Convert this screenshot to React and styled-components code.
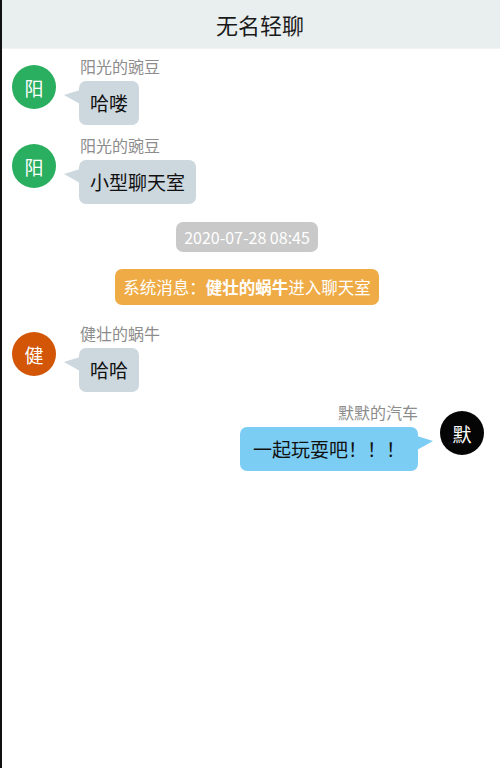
import React from 'react';
import styled, { createGlobalStyle } from 'styled-components';

const GlobalStyle = createGlobalStyle`
    html, body {
        margin: 0;
        padding: 0;
        background: #fff;
    }
    body {
        font-family: "Noto Sans CJK SC", "Noto Sans", sans-serif;
    }
`;

const Page = styled.div`
    min-height: 768px;
    border-left: 2px solid #111;
    background: #fff;
    box-sizing: border-box;
`;

const Header = styled.div`
    height: 48px;
    background-color: #e9eeee;
    display: flex;
    align-items: center;
    justify-content: center;
    padding-left: 18px;
    font-size: 22px;
    color: #1a1a1a;
    border-bottom: 1px solid #f2f4f4;
`;

const List = styled.div`
    display: flex;
    flex-direction: column;
    padding: 7px 0 0;
`;

const Row = styled.div`
    display: flex;
    flex-direction: ${(p) => (p.$mine ? 'row-reverse' : 'row')};
    align-items: flex-start;
    padding: 0 ${(p) => (p.$mine ? '16px' : '0')} 0 ${(p) => (p.$mine ? '0' : '10px')};
    margin-bottom: 10px;
`;

const Avatar = styled.div`
    width: 44px;
    height: 44px;
    border-radius: 50%;
    background-color: ${(p) => p.$color};
    color: #fff;
    font-size: 19px;
    display: flex;
    align-items: center;
    justify-content: center;
    margin-top: 9px;
    flex-shrink: 0;
`;

const Body = styled.div`
    display: flex;
    flex-direction: column;
    align-items: ${(p) => (p.$mine ? 'flex-end' : 'flex-start')};
    margin: 0 ${(p) => (p.$mine ? '22px' : '0')} 0 ${(p) => (p.$mine ? '0' : '23px')};
`;

const Name = styled.div`
    font-size: 16px;
    line-height: 20px;
    color: #8c8c8c;
    margin-left: 1px;
`;

const Bubble = styled.div`
    position: relative;
    margin-top: 5px;
    padding: 0 ${(p) => (p.$mine ? '13px' : '11px')};
    height: 44px;
    line-height: 44px;
    font-size: 19px;
    color: #111;
    border-radius: 7px;
    background-color: ${(p) => (p.$mine ? '#7ccdf4' : '#cdd7de')};

    &::before {
        content: '';
        position: absolute;
        top: 9px;
        ${(p) => (p.$mine ? 'right: -15px;' : 'left: -15px;')}
        border-top: 5px solid transparent;
        border-bottom: 9px solid transparent;
        ${(p) => (p.$mine ? 'border-left' : 'border-right')}: 16px solid ${(p) => (p.$mine ? '#7ccdf4' : '#cdd7de')};
    }
`;

const Notice = styled.div`
    align-self: center;
    display: flex;
    align-items: center;
    color: #fff;
    border-radius: 7px;
    background-color: ${(p) => p.$bg};
    font-size: ${(p) => p.$size};
    height: ${(p) => p.$h};
    padding: 0 ${(p) => p.$pad};
    margin: ${(p) => p.$margin};
    position: relative;
    left: -4px;

    b {
        font-weight: 700;
    }
`;

const messages = [
    { id: 1, type: 'msg', name: '阳光的豌豆', avatar: '阳', color: '#2aae5f', text: '哈喽' },
    { id: 2, type: 'msg', name: '阳光的豌豆', avatar: '阳', color: '#2aae5f', text: '小型聊天室' },
    { id: 3, type: 'time', text: '2020-07-28 08:45' },
    { id: 4, type: 'system', who: '健壮的蜗牛' },
    { id: 5, type: 'msg', name: '健壮的蜗牛', avatar: '健', color: '#d25606', text: '哈哈' },
    { id: 6, type: 'msg', name: '默默的汽车', avatar: '默', color: '#050505', text: '一起玩耍吧！！！', mine: true },
];

function Message({ m }) {
    return (
        <Row $mine={m.mine}>
            <Avatar $color={m.color}>{m.avatar}</Avatar>
            <Body $mine={m.mine}>
                <Name>{m.name}</Name>
                <Bubble $mine={m.mine}>{m.text}</Bubble>
            </Body>
        </Row>
    );
}

export default function App() {
    return (
        <Page>
            <GlobalStyle />
            <Header>无名轻聊</Header>
            <List>
                {messages.map((m) => {
                    if (m.type === 'time') {
                        return (
                            <Notice key={m.id} $bg="#c9c9c9" $size="16px" $h="30px" $pad="8px" $margin="8px 0 17px">
                                {m.text}
                            </Notice>
                        );
                    }
                    if (m.type === 'system') {
                        return (
                            <Notice key={m.id} $bg="#eeab46" $size="16.5px" $h="36px" $pad="8px" $margin="0 0 18px">
                                系统消息：<b>{m.who}</b>进入聊天室
                            </Notice>
                        );
                    }
                    return <Message key={m.id} m={m} />;
                })}
            </List>
        </Page>
    );
}
